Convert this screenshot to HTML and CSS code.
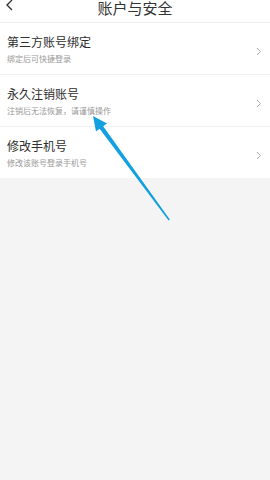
FILE: index.html
```html
<!DOCTYPE html>
<html lang="zh">
<head>
<meta charset="utf-8">
<link rel="stylesheet" href="styles.css">
</head>
<body>
<div class="header">
  <svg class="back" width="10" height="12" viewBox="0 0 10 12"><path d="M7 0 L2 5 L7 10" fill="none" stroke="#333" stroke-width="1.4"/></svg>
  <div class="title">账户与安全</div>
</div>
<div class="list">
  <div class="row">
    <div class="text">
      <div class="main">第三方账号绑定</div>
      <div class="sub">绑定后可快捷登录</div>
    </div>
    <svg class="chev" width="6" height="9" viewBox="0 0 6 9"><path d="M1 1 L4.5 4.5 L1 8" fill="none" stroke="#aaa" stroke-width="1"/></svg>
  </div>
  <div class="row">
    <div class="text">
      <div class="main">永久注销账号</div>
      <div class="sub">注销后无法恢复，请谨慎操作</div>
    </div>
    <svg class="chev" width="6" height="9" viewBox="0 0 6 9"><path d="M1 1 L4.5 4.5 L1 8" fill="none" stroke="#aaa" stroke-width="1"/></svg>
  </div>
  <div class="row">
    <div class="text">
      <div class="main">修改手机号</div>
      <div class="sub">修改该账号登录手机号</div>
    </div>
    <svg class="chev" width="6" height="9" viewBox="0 0 6 9"><path d="M1 1 L4.5 4.5 L1 8" fill="none" stroke="#aaa" stroke-width="1"/></svg>
  </div>
</div>
<svg class="pointer" width="270" height="480" viewBox="0 0 270 480"><polygon points="93,116 107,123.5 103.2,126.2 169.8,219.6 168.6,220.4 99.6,128.8 96,131.5" fill="#12a0e0"/></svg>
</body>
</html>
```
FILE: styles.css
```css
html, body {
  margin: 0;
  padding: 0;
  background: #f4f4f4;
  font-family: "Noto Sans CJK SC", "Noto Sans", sans-serif;
  height: 100%;
}
body {
  position: relative;
  overflow: hidden;
}
.header {
  height: 22px;
  background: #fff;
  border-bottom: 1px solid #eeeeee;
  display: flex;
  justify-content: center;
  position: relative;
}
.back {
  position: absolute;
  left: 5px;
  top: 0;
}
.title {
  font-size: 15px;
  line-height: 15px;
  color: #333;
  margin-top: 0;
}
.list {
  background: #fff;
}
.row {
  display: flex;
  align-items: center;
  justify-content: space-between;
  height: 51px;
  padding: 0 8px 0 7px;
  border-bottom: 1px solid #f0f0f0;
  box-sizing: content-box;
}
.row:last-child {
  border-bottom: none;
}
.text {
  display: flex;
  flex-direction: column;
  gap: 4px;
  margin-top: 1px;
}
.main {
  font-size: 12px;
  line-height: 16px;
  color: #2e2e2e;
}
.sub {
  font-size: 8px;
  line-height: 10px;
  color: #999;
}
.chev {
  margin-top: 6px;
}
.pointer {
  position: absolute;
  left: 0;
  top: 0;
  pointer-events: none;
}
```
